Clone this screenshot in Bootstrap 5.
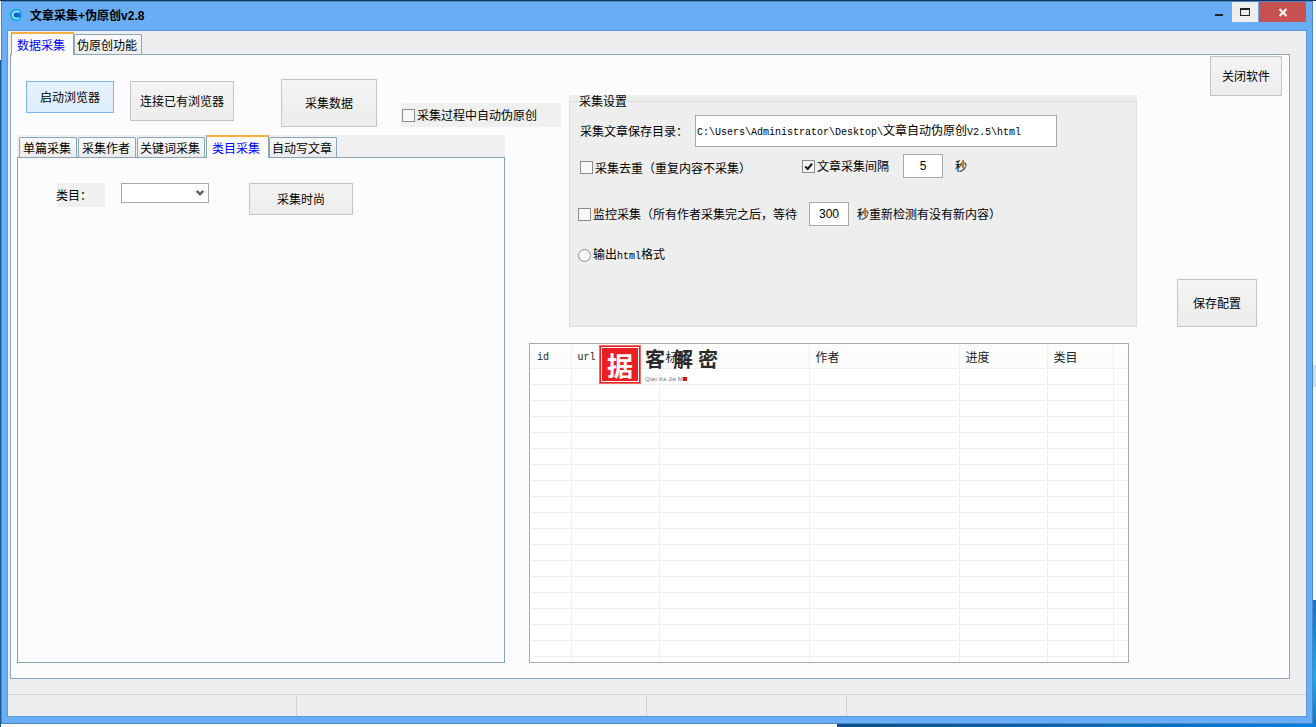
<!DOCTYPE html>
<html lang="zh-CN">
<head>
<meta charset="utf-8">
<title>文章采集+伪原创v2.8</title>
<link href="https://cdn.jsdelivr.net/npm/bootstrap@5.3.0/dist/css/bootstrap.min.css" rel="stylesheet">
<style>
html,body{height:100%;}
body{margin:0;overflow:hidden;font:12px/1.2 "Noto Sans CJK SC","Liberation Sans",sans-serif;color:#000;
  background:
   linear-gradient(90deg,#0a4f86,#0a7fe0) 837px 100%/479px 3px no-repeat,
   linear-gradient(180deg,#0a78d0,#08b2f6 60%,#0a78d0) 100% 600px/3px 127px no-repeat,
   linear-gradient(#ddd,#ddd) 100% 365px/3px 22px no-repeat,
   linear-gradient(#12365f,#12365f) 0 0/100% 1px no-repeat,
   linear-gradient(#1d5a94,#1d5a94) 0 60px/1px 100% no-repeat,
   #fff;}
.app-win{margin:1px 0 0 1px;width:1312px;height:723px;background:#68adf5;border:1px solid #4f86bf;padding:0 5px 6px;display:flex;flex-direction:column;}
.cap-bar{height:28px;flex:none;}
.cap-title{font-weight:700;font-size:12px;line-height:14px;padding-top:6px;}
.cap-title span{font-family:"Liberation Sans",sans-serif;}
.cap-ico{margin:6px 7px 0 2px;}
.cap-min{width:26px;height:20px;display:flex;align-items:center;justify-content:center;}
.cap-min i{display:block;width:8px;height:2px;background:#222;margin-top:5px;}
.cap-max{width:26px;height:20px;background:#eee;margin-right:1px;display:flex;align-items:center;justify-content:center;}
.cap-max i{display:block;width:10px;height:8px;border:1px solid #222;border-top-width:2px;}
.cap-cls{width:47px;height:20px;background:#c75050;display:flex;align-items:center;justify-content:center;margin-right:1px;}
.client-box{height:687px;flex:none;background:#eee;border:1px solid #5a98d8;display:flex;flex-direction:column;}
.wtabs{border:0;flex-wrap:nowrap;align-items:flex-end;position:relative;z-index:1;}
.wtabs .nav-link{font-size:12px;line-height:18px;height:20px;padding:1px 4px 0 2px;border:1px solid #8aa6b8;border-bottom:0;border-radius:2px 2px 0 0;
  color:#000;background:linear-gradient(#fafafa,#ebebeb);margin:0;white-space:nowrap;}
.wtabs .nav-link.pad4{padding-left:3px;padding-right:5px;}
.wtabs .nav-link.active{height:23px;margin-bottom:-1px;color:#00f;background:#fcfcff;border-top:2px solid #f5b041;border-left-color:#8aa6b8;border-right-color:#8aa6b8;padding:2px 8px 0 5px;border-radius:0;}
.gap-r1{margin-right:1px;}
.outer-tabs{height:23px;padding-left:3px;flex:none;}
.tabpage{margin-left:2px;width:1280px;height:625px;flex:none;background:#fcfcff;border:1px solid #8aa6b8;padding-left:6px;
  display:grid;grid-template-columns:488px 24px 40px 568px 1fr;grid-template-rows:80px 192px 16px 320px;}
.tool-row{grid-column:1/4;grid-row:1;display:flex;align-items:flex-start;}
.wbtn{font-size:12px;line-height:1;padding:0;border-radius:0;color:#000;border:1px solid #c4c4c4;background:linear-gradient(#f4f4f4,#ededed);flex:none;}
.wbtn-on{background:linear-gradient(#e6f2fd,#deedfb);border-color:#7fb5e8;}
.b-start{width:88px;height:32px;margin:26px 0 0 9px;}
.b-conn{width:104px;height:40px;margin:26px 0 0 16px;}
.b-grab{width:96px;height:48px;margin:24px 0 0 47px;}
.auto-chk{width:160px;height:24px;margin:48px 0 0 24px;background:#f0f0f0;display:flex;align-items:center;padding-left:1px;}
.wchk.form-check-input{width:13px;height:13px;margin:0 2px 0 0;border:1px solid #8c8c8c;border-radius:0;background-color:#f7f7f7;flex:none;box-shadow:none;}
.wchk.form-check-input:checked{background-color:#f7f7f7;border-color:#8c8c8c;background-size:11px;
  background-image:url("data:image/svg+xml,%3csvg xmlns='http://www.w3.org/2000/svg' viewBox='0 0 12 12'%3e%3cpath fill='none' stroke='%23111' stroke-width='2.2' d='M2.5 6l2.6 2.8L9.8 3'/%3e%3c/svg%3e");}
.wchk.form-check-input[type=radio]{border-radius:50%;}
.mono{font-family:"Liberation Mono",monospace;font-size:10px;}
.inner-wrap{grid-column:1;grid-row:2/5;display:flex;flex-direction:column;}
.inner-tabs{height:22px;background:#f0f0f0;padding-left:2px;flex:none;}
.inner-panel{flex:1;background:#fcfcff;border:1px solid #87a4b5;padding:25px 0 0 39px;display:flex;align-items:flex-start;}
.cat-lbl{width:48px;height:24px;background:#f0f0f0;line-height:24px;flex:none;text-indent:-1px;}
.cat-sel.form-select{width:88px;height:20px;margin-left:16px;padding:0 2px;border:1px solid #a9a9a9;border-radius:0;font-size:12px;box-shadow:none;flex:none;background-position:right 3px center;background-size:10px;
  background-image:url("data:image/svg+xml,%3csvg xmlns='http://www.w3.org/2000/svg' viewBox='0 0 12 12'%3e%3cpath fill='none' stroke='%23666' stroke-width='3' d='M2 3.5l4 4 4-4'/%3e%3c/svg%3e");}
.b-fashion{width:104px;height:32px;margin-left:40px;}
.grp-wrap{grid-column:4;grid-row:1/3;margin-top:40px;background:#eee;height:232px;}
.grp-set{height:232px;border:1px solid #ddd;padding:0;min-width:0;}
.grp-set legend{float:none;width:auto;font-size:12px;line-height:12px;margin:0 0 0 9px;padding:0;}
.grp-line{display:flex;align-items:center;}
.l-path{margin:8px 0 0 10px;height:32px;}
.l-path label{width:115px;flex:none;}
.wfield.form-control{border:1px solid #a9a9a9;border-radius:0;font-size:12px;padding:0;background:#fff;box-shadow:none;color:#000;min-height:0;}
.path-box{width:362px;height:32px;line-height:28px;padding-left:1px!important;white-space:nowrap;}
.num-box{width:40px;height:24px;text-align:center;font-family:"Liberation Sans",sans-serif;}
.l-dedupe{margin:7px 0 0 10px;height:24px;}
.dd-left{width:222px;display:flex;align-items:center;margin-top:4px;flex:none;}
.iv-txt{width:86px;flex:none;}
.sec-a{margin-left:12px;}
.l-watch{margin:24px 0 0 8px;height:24px;}
.watch-txt{width:216px;flex:none;}
.sec-b{margin-left:8px;}
.l-radio{margin:22px 0 0 8px;height:14px;}
.side-col{grid-column:5;grid-row:1/3;display:flex;flex-direction:column;justify-content:space-between;align-items:flex-start;}
.b-close{width:72px;height:40px;margin:1px 0 0 73px;}
.b-save{width:80px;height:48px;margin-left:40px;}
.tbl-box{grid-column:3/5;grid-row:4;width:600px;height:320px;border:1px solid #a9a9a9;background:#fff;padding:1px;position:relative;overflow:hidden;}
.dv-table.table{table-layout:fixed;width:596px;margin:0;border-collapse:collapse;--bs-table-bg:transparent;}
.dv-table th{height:22px;padding:0 0 0 6px;font-weight:400;font-size:12px;line-height:20px;background:#fcfcfc;border:0;border-right:1px solid #e6f1fb;border-bottom:1px solid #e6f1fb;vertical-align:middle;}
.dv-table td{height:16px;padding:0;border:0;border-right:1px solid #eee;border-bottom:1px solid #eee;}
.dv-table td:last-child,.dv-table th:last-child{border-right:0;}
.w-a{width:40px}.w-b{width:88px}.w-c{width:150px}.w-d{width:88px}.w-e{width:66px}.w-f{width:14px}
.wm-mark{position:absolute;left:69px;top:1px;width:125px;height:42px;pointer-events:none;}
.wm-seal{position:absolute;left:0;top:0;width:42px;height:39px;background:#ea1f22;border:1px solid #f06a6a;outline:1px solid #fff;outline-offset:-3px;color:#fff;font-size:26px;font-weight:700;line-height:37px;text-align:center;}
.wm-w{position:absolute;top:2px;font-size:20px;line-height:24px;font-weight:700;color:#2a2a2a;}
.wm-1{left:46px}.wm-2{left:74px}.wm-3{left:99px}
.wm-en{position:absolute;left:46px;top:30px;font:6px/8px "Liberation Sans",sans-serif;color:#777;white-space:nowrap;}
.wm-sq{position:absolute;left:84px;top:32px;width:4px;height:4px;background:#e01010;}
.status-strip{margin-top:15px;border-top:1px solid #d4d4d4;height:22px;flex:none;display:flex;padding-top:1px;}
.st-a{width:289px;border-right:1px solid #d4d4d4;}
.st-b{width:350px;border-right:1px solid #d4d4d4;}
.st-c{width:200px;border-right:1px solid #d4d4d4;}
</style>
</head>
<body>
<div class="app-win">
  <div class="cap-bar d-flex">
    <svg class="cap-ico" width="14" height="14" viewBox="0 0 14 14"><circle cx="7" cy="7" r="6.5" fill="#17b4f6"/><circle cx="7" cy="7" r="4.4" fill="#0d63c8"/><path d="M9.8 4.6A3.5 3.5 0 1 0 9.8 9.4" fill="none" stroke="#bff0ff" stroke-width="1.5"/></svg>
    <div class="cap-title flex-grow-1">文章采集+伪原创<span>v2.8</span></div>
    <div class="cap-min"><i></i></div>
    <div class="cap-max"><i></i></div>
    <div class="cap-cls"><svg width="10" height="9" viewBox="0 0 10 9"><path d="M1.5 1l7 7M8.5 1l-7 7" stroke="#fff" stroke-width="2"/></svg></div>
  </div>
  <div class="client-box">
    <ul class="nav nav-tabs wtabs outer-tabs">
      <li class="nav-item"><a class="nav-link active" href="#">数据采集</a></li>
      <li class="nav-item"><a class="nav-link" href="#">伪原创功能</a></li>
    </ul>
    <div class="tabpage">
      <div class="tool-row">
        <button type="button" class="btn wbtn wbtn-on b-start">启动浏览器</button>
        <button type="button" class="btn wbtn b-conn">连接已有浏览器</button>
        <button type="button" class="btn wbtn b-grab">采集数据</button>
        <div class="auto-chk"><input class="form-check-input wchk" type="checkbox"><span>采集过程中自动伪原创</span></div>
      </div>
      <div class="inner-wrap">
        <ul class="nav nav-tabs wtabs inner-tabs">
          <li class="nav-item gap-r1"><a class="nav-link pad4" href="#">单篇采集</a></li>
          <li class="nav-item gap-r1"><a class="nav-link pad4" href="#">采集作者</a></li>
          <li class="nav-item gap-r1"><a class="nav-link" href="#">关键词采集</a></li>
          <li class="nav-item"><a class="nav-link active" href="#">类目采集</a></li>
          <li class="nav-item"><a class="nav-link" href="#">自动写文章</a></li>
        </ul>
        <div class="inner-panel">
          <div class="cat-lbl">类目：</div>
          <select class="form-select cat-sel"><option></option></select>
          <button type="button" class="btn wbtn b-fashion">采集时尚</button>
        </div>
      </div>
      <div class="grp-wrap">
        <fieldset class="grp-set">
          <legend>采集设置</legend>
          <div class="grp-line l-path">
            <label>采集文章保存目录：</label>
            <div class="form-control wfield path-box"><span class="mono">C:\Users\Administrator\Desktop\</span>文章自动伪原创<span class="mono">V2.5\html</span></div>
          </div>
          <div class="grp-line l-dedupe">
            <div class="dd-left"><input class="form-check-input wchk" type="checkbox"><span>采集去重（重复内容不采集）</span></div>
            <input class="form-check-input wchk" type="checkbox" checked><span class="iv-txt">文章采集间隔</span>
            <input class="form-control wfield num-box" value="5"><span class="sec-a">秒</span>
          </div>
          <div class="grp-line l-watch">
            <input class="form-check-input wchk" type="checkbox"><span class="watch-txt">监控采集（所有作者采集完之后，等待</span>
            <input class="form-control wfield num-box" value="300"><span class="sec-b">秒重新检测有没有新内容）</span>
          </div>
          <div class="grp-line l-radio">
            <input class="form-check-input wchk" type="radio"><span>输出<span class="mono">html</span>格式</span>
          </div>
        </fieldset>
      </div>
      <div class="side-col">
        <button type="button" class="btn wbtn b-close">关闭软件</button>
        <button type="button" class="btn wbtn b-save">保存配置</button>
      </div>
      <div class="tbl-box">
        <table class="table dv-table">
          <thead><tr><th class="w-a"><span class="mono">id</span></th><th class="w-b"><span class="mono">url</span></th><th class="w-c">标题</th><th class="w-c">作者</th><th class="w-d">进度</th><th class="w-e">类目</th><th class="w-f"></th></tr></thead>
          <tbody>
            <tr><td></td><td></td><td></td><td></td><td></td><td></td><td></td></tr>
            <tr><td></td><td></td><td></td><td></td><td></td><td></td><td></td></tr>
            <tr><td></td><td></td><td></td><td></td><td></td><td></td><td></td></tr>
            <tr><td></td><td></td><td></td><td></td><td></td><td></td><td></td></tr>
            <tr><td></td><td></td><td></td><td></td><td></td><td></td><td></td></tr>
            <tr><td></td><td></td><td></td><td></td><td></td><td></td><td></td></tr>
            <tr><td></td><td></td><td></td><td></td><td></td><td></td><td></td></tr>
            <tr><td></td><td></td><td></td><td></td><td></td><td></td><td></td></tr>
            <tr><td></td><td></td><td></td><td></td><td></td><td></td><td></td></tr>
            <tr><td></td><td></td><td></td><td></td><td></td><td></td><td></td></tr>
            <tr><td></td><td></td><td></td><td></td><td></td><td></td><td></td></tr>
            <tr><td></td><td></td><td></td><td></td><td></td><td></td><td></td></tr>
            <tr><td></td><td></td><td></td><td></td><td></td><td></td><td></td></tr>
            <tr><td></td><td></td><td></td><td></td><td></td><td></td><td></td></tr>
            <tr><td></td><td></td><td></td><td></td><td></td><td></td><td></td></tr>
            <tr><td></td><td></td><td></td><td></td><td></td><td></td><td></td></tr>
            <tr><td></td><td></td><td></td><td></td><td></td><td></td><td></td></tr>
            <tr><td></td><td></td><td></td><td></td><td></td><td></td><td></td></tr>
            <tr><td></td><td></td><td></td><td></td><td></td><td></td><td></td></tr>
          </tbody>
        </table>
        <div class="wm-mark">
          <div class="wm-seal">据</div>
          <span class="wm-w wm-1">客</span><span class="wm-w wm-2">解</span><span class="wm-w wm-3">密</span>
          <span class="wm-en">Qian Ke Jie Mi</span><span class="wm-sq"></span>
        </div>
      </div>
    </div>
    <div class="status-strip">
      <div class="st-a"></div><div class="st-b"></div><div class="st-c"></div>
    </div>
  </div>
</div>
<script src="https://cdn.jsdelivr.net/npm/bootstrap@5.3.0/dist/js/bootstrap.bundle.min.js"></script>
</body>
</html>
